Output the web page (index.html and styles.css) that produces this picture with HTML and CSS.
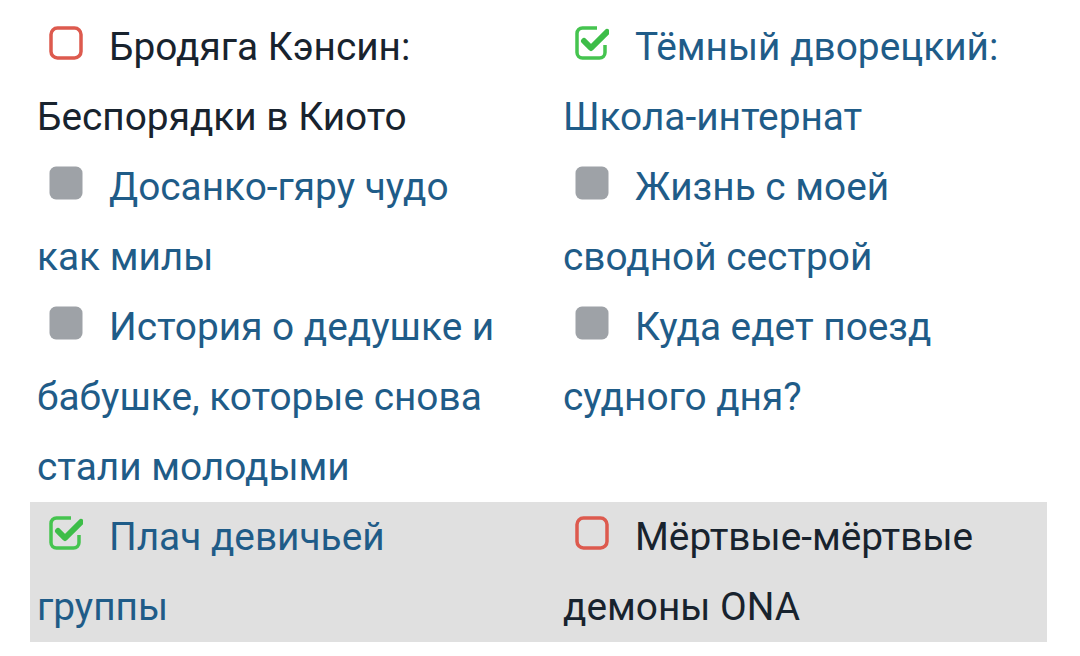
FILE: index.html
```html
<!DOCTYPE html>
<html lang="ru">
<head>
<meta charset="utf-8">
<link rel="stylesheet" href="styles.css">
</head>
<body>
<div class="list">
  <div class="row">
    <div class="cell dark"><svg class="ico" viewBox="0 0 34 34"><rect x="2" y="2" width="30" height="30" rx="6.5" class="red"/></svg>Бродяга Кэнсин: Беспорядки в Киото</div>
    <div class="cell blue"><svg class="ico" viewBox="0 0 34 34"><path d="M30 19 V26.5 a5.5 5.5 0 0 1 -5.5 5.5 H7.5 a5.5 5.5 0 0 1 -5.5 -5.5 V7.5 a5.5 5.5 0 0 1 5.5 -5.5 H22" class="grn"/><path d="M9 15 L16 22 L32 6" class="chk"/></svg>Тёмный дворецкий: Школа-интернат</div>
  </div>
  <div class="row">
    <div class="cell blue"><svg class="ico" viewBox="0 0 34 34"><rect x="0.5" y="0.5" width="33" height="33" rx="6.5" class="gry"/></svg>Досанко-гяру чудо как милы</div>
    <div class="cell blue"><svg class="ico" viewBox="0 0 34 34"><rect x="0.5" y="0.5" width="33" height="33" rx="6.5" class="gry"/></svg>Жизнь с моей сводной сестрой</div>
  </div>
  <div class="row">
    <div class="cell blue"><svg class="ico" viewBox="0 0 34 34"><rect x="0.5" y="0.5" width="33" height="33" rx="6.5" class="gry"/></svg>История о дедушке и бабушке, которые снова стали молодыми</div>
    <div class="cell blue"><svg class="ico" viewBox="0 0 34 34"><rect x="0.5" y="0.5" width="33" height="33" rx="6.5" class="gry"/></svg>Куда едет поезд судного дня?</div>
  </div>
  <div class="row hl">
    <div class="cell blue"><svg class="ico" viewBox="0 0 34 34"><path d="M30 19 V26.5 a5.5 5.5 0 0 1 -5.5 5.5 H7.5 a5.5 5.5 0 0 1 -5.5 -5.5 V7.5 a5.5 5.5 0 0 1 5.5 -5.5 H22" class="grn"/><path d="M9 15 L16 22 L32 6" class="chk"/></svg>Плач девичьей группы</div>
    <div class="cell dark"><svg class="ico" viewBox="0 0 34 34"><rect x="2" y="2" width="30" height="30" rx="6.5" class="red"/></svg>Мёртвые-мёртвые демоны ONA</div>
  </div>
</div>
</body>
</html>
```

FILE: styles.css
```css
html, body {
  margin: 0;
  padding: 0;
  background: #ffffff;
}
body {
  font-family: Roboto, "Noto Sans", sans-serif;
  font-size: 38.8px;
  line-height: 70px;
}
.list {
  width: 1017px;
  margin: 12px 0 0 30px;
}
.row {
  display: flex;
  padding: 0 7px;
}
.row.hl {
  background: #e0e0e0;
}
.cell {
  box-sizing: border-box;
}
.cell:first-child {
  width: 526px;
  padding-right: 50px;
}
.cell:last-child {
  flex: 1;
}
.dark { color: #18232e; }
.blue { color: #1f5c88; }
.ico {
  width: 34px;
  height: 34px;
  margin: 0 26px 0 12px;
  vertical-align: 0;
}
.red {
  fill: none;
  stroke: #dd5a4e;
  stroke-width: 3.5;
}
.grn {
  fill: none;
  stroke: #45c44f;
  stroke-width: 3.5;
}
.chk {
  fill: none;
  stroke: #3dbd48;
  stroke-width: 6;
  stroke-linecap: round;
  stroke-linejoin: round;
}
.gry {
  fill: #9ea2a7;
}
```
